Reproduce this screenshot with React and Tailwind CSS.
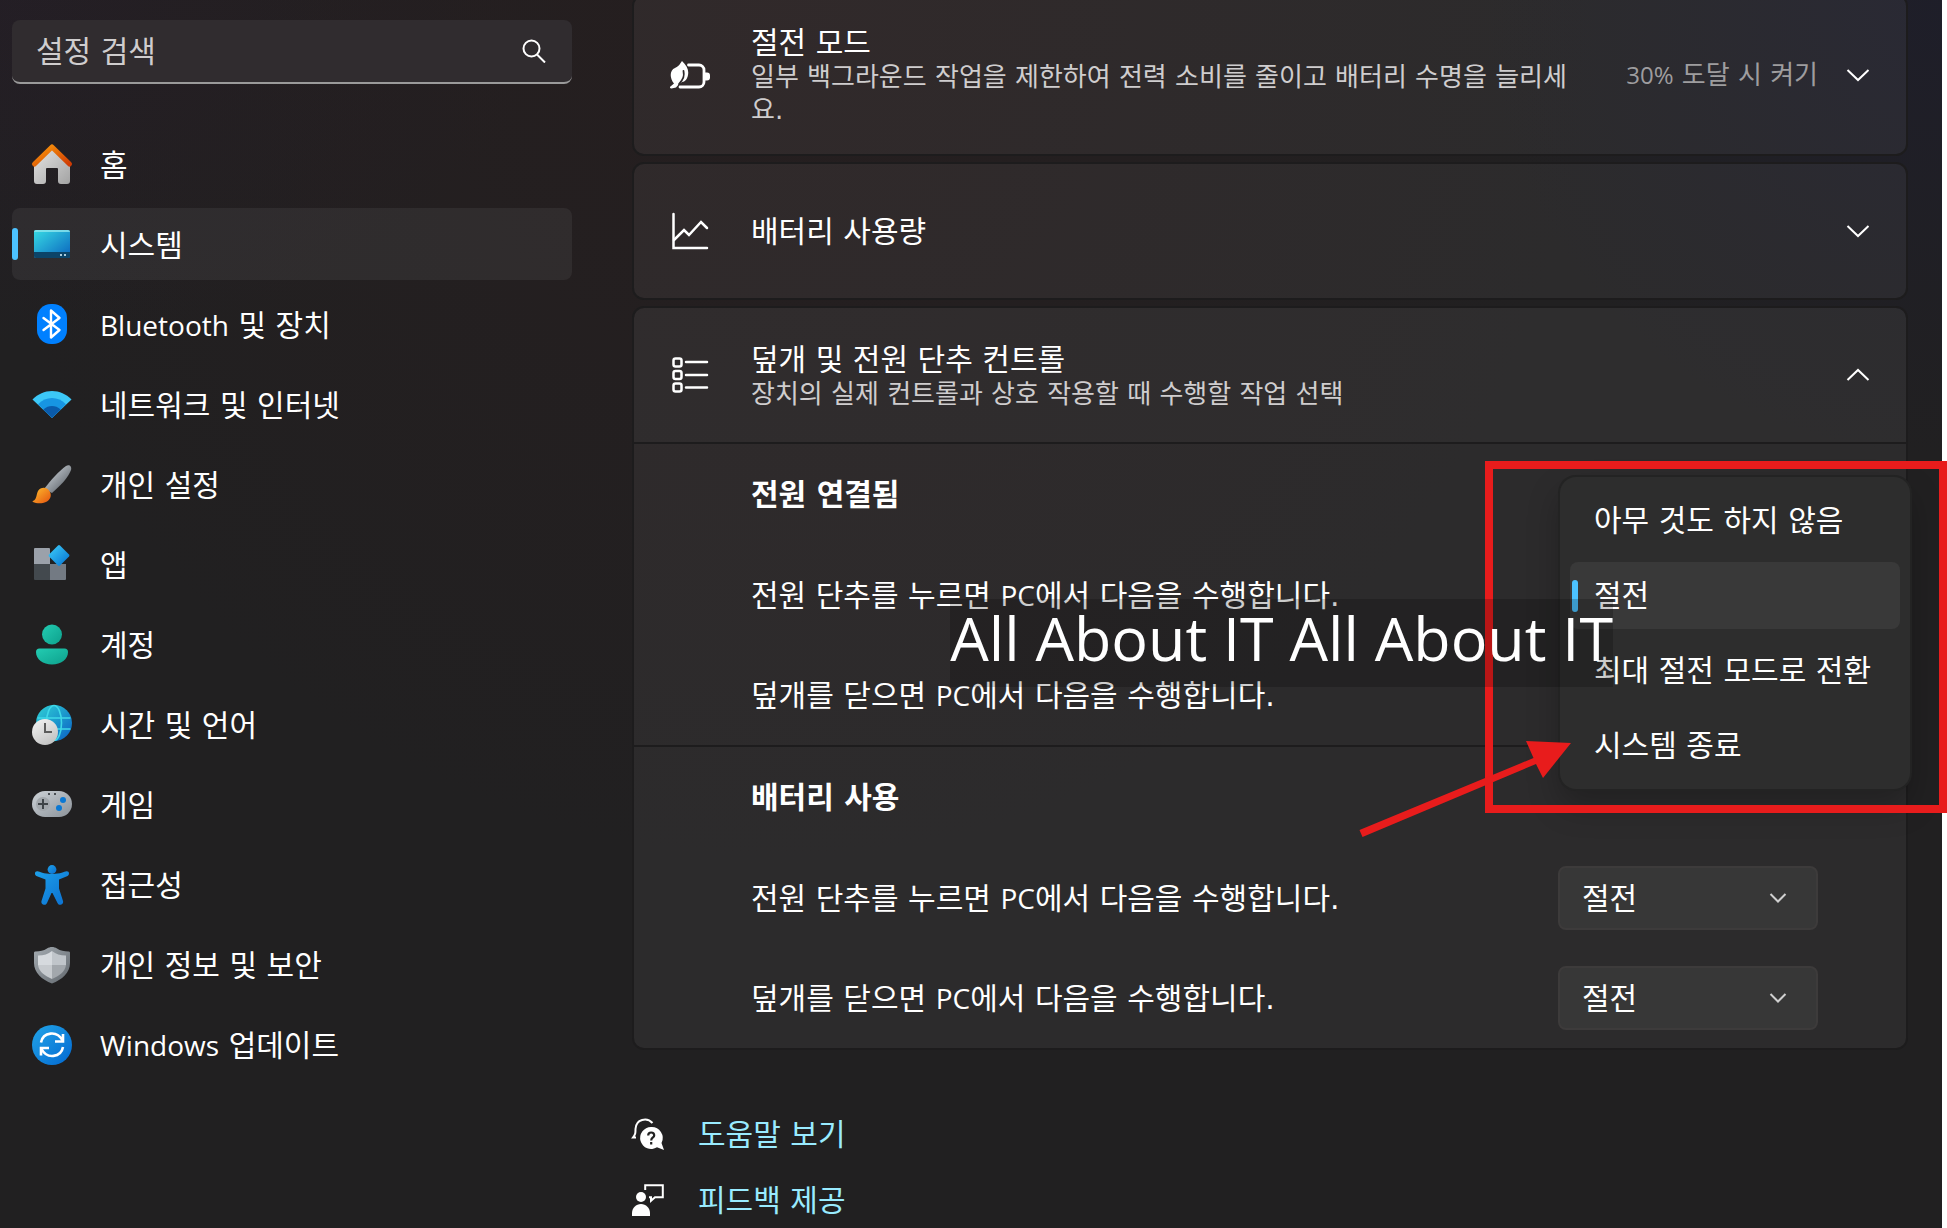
import React, { useState } from 'react';

const navItems = [
  { id: 'home', label: '홈' },
  { id: 'system', label: '시스템' },
  { id: 'bluetooth', latin: 'Bluetooth', label: ' 및 장치' },
  { id: 'network', label: '네트워크 및 인터넷' },
  { id: 'personalization', label: '개인 설정' },
  { id: 'apps', label: '앱' },
  { id: 'accounts', label: '계정' },
  { id: 'time', label: '시간 및 언어' },
  { id: 'gaming', label: '게임' },
  { id: 'accessibility', label: '접근성' },
  { id: 'privacy', label: '개인 정보 및 보안' },
  { id: 'update', latin: 'Windows', label: ' 업데이트' },
];

const powerOptions = ['아무 것도 하지 않음', '절전', '최대 절전 모드로 전환', '시스템 종료'];

const navIcons = {
  home: (
    <>
      <defs>
        <linearGradient id="homeBody" x1="0" y1="0" x2="1" y2="1">
          <stop offset="0" stopColor="#e6e6e6" />
          <stop offset="1" stopColor="#a3a3a3" />
        </linearGradient>
        <linearGradient id="homeRoof" x1="0" y1="0" x2="1" y2="1">
          <stop offset="0" stopColor="#fb9a0c" />
          <stop offset="1" stopColor="#cf3b04" />
        </linearGradient>
      </defs>
      <path d="M2 20 20 3l18 17v17a3 3 0 0 1-3 3h-6a3 3 0 0 1-3-3V25a1 1 0 0 0-1-1H15a1 1 0 0 0-1 1v12a3 3 0 0 1-3 3H5a3 3 0 0 1-3-3z" fill="url(#homeBody)" />
      <path d="M2.500 20 20 3l17.500 17" fill="none" stroke="url(#homeRoof)" strokeWidth="5" strokeLinecap="round" strokeLinejoin="round" />
    </>
  ),
  system: (
    <>
      <defs>
        <linearGradient id="sysScreen" x1="0" y1="0" x2="1" y2="1">
          <stop offset="0" stopColor="#37dbe5" />
          <stop offset="1" stopColor="#0a63bd" />
        </linearGradient>
      </defs>
      <rect x="2" y="6" width="36" height="28" rx="2" fill="url(#sysScreen)" />
      <path d="M2 8a2 2 0 0 1 2-2h32a2 2 0 0 1 2 2z" fill="#8fe6ee" opacity=".8" />
      <path d="M2 28h36v4a2 2 0 0 1-2 2H4a2 2 0 0 1-2-2z" fill="#0c4468" />
      <path d="M28 30h2v2h-2zM32 30h2v2h-2z" fill="#a9cbdc" />
    </>
  ),
  bluetooth: (
    <>
      <rect x="5" y="0" width="30" height="40" rx="14" fill="#0080ff" />
      <path d="m11.500 14 16 12-8.500 7.500v-27l8.500 7.500-16 12" fill="none" stroke="#fff" strokeWidth="2.400" strokeLinecap="round" strokeLinejoin="round" />
    </>
  ),
  network: (
    <>
      <path d="M20 34 .5 15.500C6 10 12.500 7 20 7s14 3 19.500 8.500z" fill="#3cc8f7" />
      <path d="M20 34 6 20.300C10 16 15 14 20 14s10 2 14 6.300z" fill="#1795e2" />
      <path d="m20 34-8.700-8.500C14 23 17 22 20 22s6 1 8.700 3.500z" fill="#0a5bab" />
    </>
  ),
  personalization: (
    <>
      <defs>
        <linearGradient id="brushHandle" x1="0" y1="0" x2="1" y2="1">
          <stop offset="0.200" stopColor="#c3c9cf" />
          <stop offset="0.800" stopColor="#666c73" />
        </linearGradient>
        <linearGradient id="brushTip" x1="0" y1="0" x2="1" y2="1">
          <stop offset="0" stopColor="#ffc02e" />
          <stop offset="1" stopColor="#e4520f" />
        </linearGradient>
      </defs>
      <path d="M12 25C19 16 27 7 34 2c3-2 6 0 5 4-3 8-11 16-19 23z" fill="url(#brushHandle)" />
      <path d="M1 37c4-2 3-6 5-10 3-5 10-4 12 1 2 4 0 8-4 10-4 2-10 1.500-13 0-.6-.3-.6-.7 0-1z" fill="url(#brushTip)" />
    </>
  ),
  apps: (
    <>
      <defs>
        <linearGradient id="appsDiamond" x1="0" y1="0" x2="1" y2="1">
          <stop offset="0" stopColor="#3fd0fb" />
          <stop offset="1" stopColor="#0470d0" />
        </linearGradient>
      </defs>
      <path d="M3 4h14a1 1 0 0 1 1 1v15H2V5a1 1 0 0 1 1-1z" fill="#9ba1aa" />
      <path d="M2 20h16v16H3a1 1 0 0 1-1-1z" fill="#43494e" />
      <path d="M18 20h16v15a1 1 0 0 1-1 1H18z" fill="#737a83" />
      <path d="M26 1.500a1.500 1.500 0 0 1 2 0l9 9a1.500 1.500 0 0 1 0 2l-9 9a1.500 1.500 0 0 1-2 0l-9-9a1.500 1.500 0 0 1 0-2z" fill="url(#appsDiamond)" />
    </>
  ),
  accounts: (
    <>
      <defs>
        <linearGradient id="person" x1="0" y1="0" x2="1" y2="1">
          <stop offset="0" stopColor="#23ccb2" />
          <stop offset="1" stopColor="#0da08c" />
        </linearGradient>
      </defs>
      <circle cx="20" cy="10.500" r="10" fill="url(#person)" />
      <path d="M7.500 24.500h25A3.500 3.500 0 0 1 36 28c0 7.500-7 12.500-16 12.500S4 35.500 4 28a3.500 3.500 0 0 1 3.500-3.500z" fill="url(#person)" />
    </>
  ),
  time: (
    <>
      <defs>
        <linearGradient id="globe" x1="0" y1="0" x2="1" y2="1">
          <stop offset="0" stopColor="#2fd3d6" />
          <stop offset="1" stopColor="#0a5fc4" />
        </linearGradient>
        <linearGradient id="clockFace" x1="0" y1="0" x2="0.600" y2="1">
          <stop offset="0" stopColor="#f5f5f5" />
          <stop offset="1" stopColor="#c4c4c4" />
        </linearGradient>
      </defs>
      <circle cx="22" cy="19" r="18" fill="url(#globe)" />
      <g fill="none" stroke="#3fd9e8" strokeWidth="1.600">
        <ellipse cx="22" cy="19" rx="7.500" ry="17.500" />
        <path d="M5.500 14h33M5.500 25h33" />
      </g>
      <circle cx="13" cy="28" r="13" fill="url(#clockFace)" />
      <path d="M13 19v9h7" fill="none" stroke="#5c5c5c" strokeWidth="2" />
    </>
  ),
  gaming: (
    <>
      <defs>
        <linearGradient id="pad" x1="0" y1="0" x2="1" y2="1">
          <stop offset="0" stopColor="#cdd2d7" />
          <stop offset="1" stopColor="#8b9299" />
        </linearGradient>
      </defs>
      <rect x="0" y="7" width="40" height="26" rx="13" fill="url(#pad)" />
      <circle cx="11" cy="20" r="7" fill="#a2a7ac" />
      <path d="M11 15v10M6 20h10" stroke="#3f4448" strokeWidth="2" />
      <circle cx="31" cy="16" r="3" fill="#0a78d4" />
      <circle cx="27" cy="24" r="3" fill="#0a78d4" />
      <path d="M16 9h2v2h-2zM22 9h2v2h-2z" fill="#4a4f54" />
    </>
  ),
  accessibility: (
    <>
      <defs>
        <linearGradient id="figure" x1="0" y1="0" x2="1" y2="1">
          <stop offset="0" stopColor="#1da0ea" />
          <stop offset="1" stopColor="#0b6fd0" />
        </linearGradient>
      </defs>
      <circle cx="20" cy="5.500" r="4.400" fill="url(#figure)" />
      <path d="M5.500 7.300c2.500.4 5.500 2.700 14.500 2.700s12-2.300 14.500-2.700c3-.3 3.500 3.700.5 5l-8 3.200v9l4 12.500c1 3.500-4 5.500-5.500 2L20.500 29h-1L15 39c-1.500 3.500-6.500 1.500-5.500-2l4-12.500v-9l-8.500-3.200c-3-1.300-2.500-5.300.5-5z" fill="url(#figure)" />
    </>
  ),
  privacy: (
    <>
      <defs>
        <linearGradient id="shieldEdge" x1="0" y1="0" x2="1" y2="1">
          <stop offset="0" stopColor="#a4abb1" />
          <stop offset="1" stopColor="#62686e" />
        </linearGradient>
      </defs>
      <path d="M15 4.500c3-2 7-2 10 0 3.500 2.200 7 3 11.500 3 1 0 1.500.5 1.500 1.500V19c0 10-8 16.500-18 20.500C10 35.500 2 29 2 19V9c0-1 .5-1.500 1.500-1.500 4.500 0 8-.8 11.500-3z" fill="url(#shieldEdge)" />
      <path d="M20 7c-4 3-8 4.500-14 4.500V21h14z" fill="#d6dade" />
      <path d="M20 7c4 3 8 4.500 14 4.500V21H20z" fill="#c0c5ca" />
      <path d="M6 21c1 7 7 11 14 14V21z" fill="#c6cace" />
      <path d="M34 21c-1 7-7 11-14 14V21z" fill="#a2a7ac" />
    </>
  ),
  update: (
    <>
      <defs>
        <linearGradient id="updateDisc" x1="0" y1="0" x2="1" y2="1">
          <stop offset="0" stopColor="#22a5e8" />
          <stop offset="1" stopColor="#0268d1" />
        </linearGradient>
      </defs>
      <circle cx="20" cy="21" r="20" fill="url(#updateDisc)" />
      <g fill="none" stroke="#fff" strokeWidth="2.600">
        <path d="M9 18.500C11 8 25 6 30.500 16.500" />
        <path d="M31 10v7.500h-8" />
        <path d="M31 23C29 33.500 15 35.500 9.500 25" />
        <path d="M9 31.500V24h8" />
      </g>
    </>
  ),
};

const Latin = ({ children }) => (
  <span className="font-['Open_Sans',sans-serif] text-[28px]">{children}</span>
);

const Chevron = ({ up }) => (
  <svg viewBox="0 0 24 14" className="h-[14px] w-6 shrink-0" fill="none" stroke="#fff" strokeWidth="2">
    <path d={up ? 'M1.500 12 12 2l10.500 10' : 'm1.500 2 10.500 10 10.500-10'} />
  </svg>
);

const Sidebar = () => {
  const [active, setActive] = useState('system');
  const [search, setSearch] = useState('');

  return (
    <aside className="flex w-[560px] shrink-0 flex-col pt-5">
      <div className="flex h-16 items-center rounded-lg border-b-2 border-[#9a9a9a] bg-[#302c2f] pr-[26px] pl-6">
        <input
          type="text"
          aria-label="설정 검색"
          placeholder="설정 검색"
          value={search}
          onChange={(e) => setSearch(e.target.value)}
          className="min-w-0 flex-1 bg-transparent outline-none placeholder:text-[#cfcdce]"
        />
        <button aria-label="검색">
          <svg viewBox="0 0 24 24" className="size-6" fill="none" stroke="#fff" strokeWidth="2">
            <circle cx="9.500" cy="9.500" r="8" />
            <path d="m15 15.500 8 8" />
          </svg>
        </button>
      </div>
      <nav className="mt-11 flex flex-col gap-2">
        {navItems.map((item) => (
          <button
            key={item.id}
            onClick={() => setActive(item.id)}
            className={
              active === item.id
                ? 'flex h-[72px] items-center rounded-lg bg-white/6 text-left'
                : 'flex h-[72px] items-center rounded-lg text-left hover:bg-white/5'
            }
          >
            <span className={active === item.id ? 'h-8 w-1.5 rounded-full bg-[#4cc2ff]' : 'h-8 w-1.5'}></span>
            <svg viewBox="0 0 40 40" className="ml-3.5 size-10 overflow-visible">{navIcons[item.id]}</svg>
            <span className="ml-7 pt-0.5 whitespace-pre">
              {item.latin ? <Latin>{item.latin}</Latin> : null}
              {item.label}
            </span>
          </button>
        ))}
      </nav>
    </aside>
  );
};

const PowerSelect = ({ id }) => {
  const [value, setValue] = useState('절전');

  return (
    <div className="relative w-[260px]">
      <select
        id={id}
        value={value}
        onChange={(e) => setValue(e.target.value)}
        className="h-16 w-full appearance-none rounded-lg border-2 border-[#3d3b3b] bg-[#373737] pl-[22px] outline-none"
      >
        {powerOptions.map((option) => (
          <option key={option}>{option}</option>
        ))}
      </select>
      <svg viewBox="0 0 18 12" className="pointer-events-none absolute top-[26px] right-[31px] h-3 w-[18px]" fill="none" stroke="#d0d0d0" strokeWidth="2">
        <path d="m1.500 2 7.500 7.500L16.500 2" />
      </svg>
    </div>
  );
};

const PowerMenu = () => {
  const [selected, setSelected] = useState('절전');

  return (
    <div role="listbox" className="absolute -top-[86px] left-0.5 z-10 flex w-[350px] flex-col gap-2 rounded-2xl bg-[#2d2d2d] p-2.5 shadow-[0_0_0_2px_#232323,0_16px_32px_rgba(0,0,0,0.25)]">
      {powerOptions.map((option) => (
        <button
          key={option}
          role="option"
          aria-selected={selected === option}
          onClick={() => setSelected(option)}
          className={
            selected === option
              ? 'flex h-[67px] items-center rounded-lg bg-[#393939] pl-0.5 text-left'
              : 'flex h-[67px] items-center rounded-lg pl-0.5 text-left hover:bg-[#353535]'
          }
        >
          <span className={selected === option ? 'h-8 w-1.5 rounded-full bg-[#4cc2ff]' : 'h-8 w-1.5'}></span>
          <span className="ml-4 whitespace-nowrap">{option}</span>
        </button>
      ))}
    </div>
  );
};

const PowerSection = ({ title, name, menuOpen }) => (
  <section className="border-t-2 border-[#1d1c1d] bg-white/5 pr-[88px] pl-[117px] last:rounded-b-[10px]">
    <h3 className="flex h-[101px] items-center font-bold">{title}</h3>
    <div className="flex h-[100px] items-center justify-between">
      <label htmlFor={name + '-button'}>
        전원 단추를 누르면 <Latin>PC</Latin>에서 다음을 수행합니다.
      </label>
      <div className="relative">
        <PowerSelect id={name + '-button'} />
        {menuOpen ? <PowerMenu /> : null}
      </div>
    </div>
    <div className="flex h-[100px] items-center justify-between">
      <label htmlFor={name + '-lid'}>
        덮개를 닫으면 <Latin>PC</Latin>에서 다음을 수행합니다.
      </label>
      <PowerSelect id={name + '-lid'} />
    </div>
  </section>
);

const Main = () => (
  <main className="-mt-1.5 ml-[60px] mr-[34px] flex min-w-0 flex-1 flex-col gap-1.5">
    <div className="overflow-hidden rounded-xl border-2 border-[#1d1c1d]">
      <button className="flex h-[158px] w-full items-center bg-white/5 pr-9 pl-9 text-left">
        <svg viewBox="0 0 40 40" className="size-10 shrink-0">
          <path d="M18.500 10H29a5 5 0 0 1 5 5v12a5 5 0 0 1-5 5H10" fill="none" stroke="#fff" strokeWidth="2.800" strokeLinecap="round" />
          <path d="M35 17.500h2a3 3 0 0 1 3 3v2a3 3 0 0 1-3 3h-2z" fill="#fff" />
          <path d="M12 6c5 5 7 9 6 14-.7 4-3 7-6 7l-3 2-3 3.500-4.500 1c-2 0-2-1.500-.5-2.500l3-2.500C-1 22 0 15 5 13c4-2 5-4 7-7z" fill="#fff" />
          <path d="M13.500 16c1 5 0 8-4.500 13" fill="none" stroke="#2e2a2b" strokeWidth="1.800" strokeLinecap="round" />
        </svg>
        <span className="ml-[41px] flex-1 pt-0.5">
          <span className="block leading-9">절전 모드</span>
          <span className="block text-[26px] leading-[33px] text-[#cfcdce]">
            일부 백그라운드 작업을 제한하여 전력 소비를 줄이고 배터리 수명을 늘리세요.
          </span>
        </span>
        <span className="mr-7 ml-12 whitespace-nowrap text-[26px] text-[#9e9d9f]">
          <span className="font-['Open_Sans',sans-serif] text-2xl">30%</span> 도달 시 켜기
        </span>
        <Chevron />
      </button>
    </div>

    <div className="overflow-hidden rounded-xl border-2 border-[#1d1c1d]">
      <button className="flex h-[134px] w-full items-center bg-white/5 pr-9 pl-9 text-left">
        <svg viewBox="0 0 40 40" className="size-10 shrink-0" fill="none" stroke="#fff" strokeWidth="2.500" strokeLinecap="round">
          <path d="M3.500 3v34H37" />
          <path d="m4 29 10-10 5 5 12-13 6 6" />
        </svg>
        <span className="ml-[41px] flex-1">배터리 사용량</span>
        <Chevron />
      </button>
    </div>

    <div className="rounded-xl border-2 border-[#1d1c1d]">
      <button className="flex h-[134px] w-full items-center rounded-t-[10px] bg-white/6 pr-9 pl-9 text-left">
        <svg viewBox="0 0 40 40" className="size-10 shrink-0" fill="none" stroke="#fff" strokeWidth="2.500">
          <rect x="3.500" y="3.500" width="8" height="8" rx="2" />
          <rect x="3.500" y="16" width="8" height="8" rx="2" />
          <rect x="3.500" y="28.500" width="8" height="8" rx="2" />
          <path d="M16 7h21M16 20h21M16 32.500h21" strokeLinecap="round" />
        </svg>
        <span className="ml-[41px] flex-1 pt-0.5">
          <span className="block leading-9">덮개 및 전원 단추 컨트롤</span>
          <span className="block text-[26px] leading-[33px] text-[#cfcdce]">장치의 실제 컨트롤과 상호 작용할 때 수행할 작업 선택</span>
        </span>
        <Chevron up />
      </button>
      <PowerSection title="전원 연결됨" name="plugged" menuOpen />
      <PowerSection title="배터리 사용" name="battery" />
    </div>

    <div className="mt-[58px] flex flex-col gap-[26px] text-[#99ebff]">
      <a href="#help" className="flex h-10 items-center gap-[34px]">
        <svg viewBox="0 0 32 32" className="size-8 overflow-visible">
          <path d="M20.500 5C15-1 4 1 3.500 11c0 4 0 5-2.500 8.500h3" fill="none" stroke="#fff" strokeWidth="2" />
          <path d="M19 9a11 11 0 1 0 6 20.300l7 2.700-2.500-7A11 11 0 0 0 19 9z" fill="#fff" />
          <path d="M16.200 17.500c0-4 6-4 6 0 0 2-3 2-3 5m0 1.500v2.500" fill="none" stroke="#222" strokeWidth="2.200" />
        </svg>
        도움말 보기
      </a>
      <a href="#feedback" className="flex h-10 items-center gap-[34px]">
        <svg viewBox="0 0 32 32" className="size-8">
          <circle cx="9" cy="13" r="5" fill="#fff" />
          <path d="M0 32v-3c0-5 4-9 9-9s9 4 9 9v3z" fill="#fff" />
          <path d="M13.200 6V1.200h17.600v12H23l-4 3.500v-3.500h-2" fill="none" stroke="#fff" strokeWidth="2" />
        </svg>
        피드백 제공
      </a>
    </div>
  </main>
);

const Annotations = () => (
  <div className="pointer-events-none absolute inset-0 z-20">
    <div className="absolute top-[461px] right-0 h-[352px] w-[462px] border-8 border-[#e81c1c]"></div>
    <svg viewBox="0 0 220 100" className="absolute top-[739px] right-[369px] h-[100px] w-[220px]" fill="#e81c1c">
      <path d="m1.500 91 174-72-7.500-17 45 2-28 35-7-14L4.500 98z" />
    </svg>
    <p className="absolute top-[599px] right-[334px] h-[88px] bg-black/20 font-['Open_Sans',sans-serif] text-[61px] leading-[78px] whitespace-nowrap">
      All About IT All About IT
    </p>
  </div>
);

export default function App() {
  return (
    <div className="relative min-h-screen overflow-hidden bg-white pr-[5px] font-['DejaVu_Sans','Noto_Sans_CJK_KR',sans-serif] text-[30px] text-white">
      <div className="flex min-h-screen bg-[#212021] bg-[radial-gradient(circle_at_100%_0%,rgba(30,30,42,0.9),transparent_20%),radial-gradient(ellipse_at_40%_0%,rgba(38,30,31,0.9),transparent_50%),radial-gradient(ellipse_at_0%_0%,rgba(36,30,38,0.9),transparent_20%)] pl-3">
        <Sidebar />
        <Main />
      </div>
      <Annotations />
    </div>
  );
}
